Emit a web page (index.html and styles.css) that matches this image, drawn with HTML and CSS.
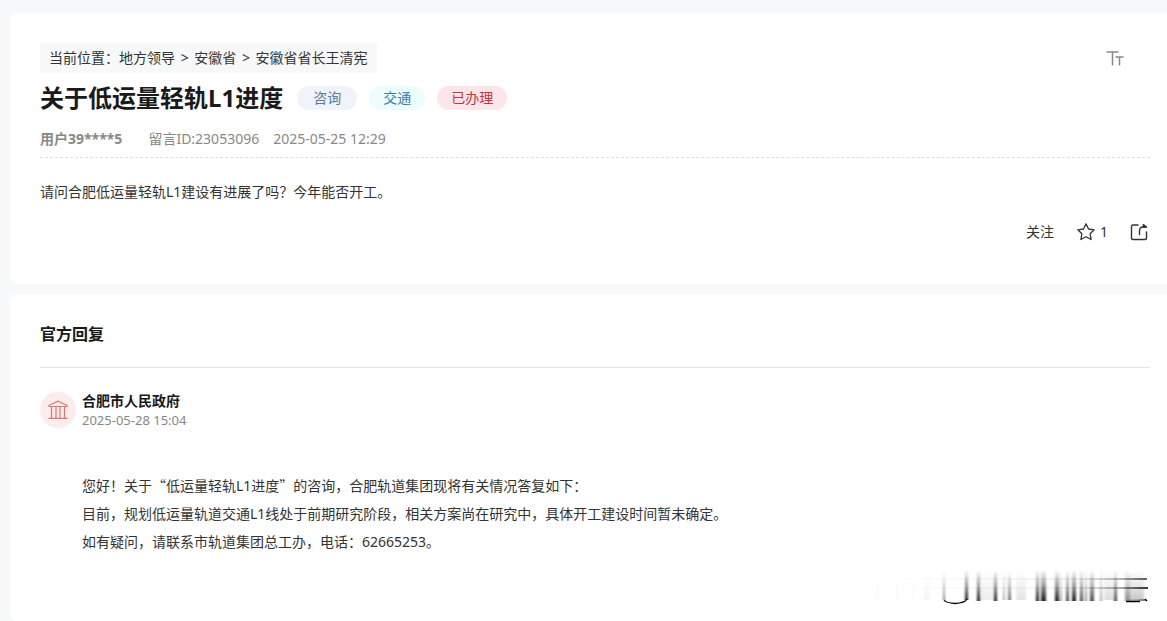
FILE: index.html
```
<!DOCTYPE html>
<html lang="zh-CN">
<head>
	<meta charset="utf-8">
	<title>关于低运量轻轨L1进度</title>
	<link rel="stylesheet" href="styles.css">
</head>
<body>
<main class="page">
	<article class="card message">
		<div class="top">
			<nav class="crumbs">当前位置：<a href="#">地方领导</a> <span class="sep">&gt;</span> <a href="#">安徽省</a> <span class="sep">&gt;</span> <a href="#">安徽省省长王清宪</a></nav>
			<button type="button" class="fontsize" aria-label="字号">
				<svg width="18" height="16" viewBox="0 0 18 16" fill="none" stroke="#888" stroke-width="1.5">
					<path d="M0.5 2H12.5M6.5 2V15.5M9.5 7H17.5M13.5 7V15.5"/>
				</svg>
			</button>
		</div>
		<div class="title">
			<h1>关于低运量轻轨L1进度</h1>
			<span class="tag tag-type">咨询</span>
			<span class="tag tag-field">交通</span>
			<span class="tag tag-state">已办理</span>
		</div>
		<div class="meta">
			<b>用户39****5</b>
			<span>留言ID:23053096</span>
			<time>2025-05-25 12:29</time>
		</div>
		<p class="question">请问合肥低运量轻轨L1建设有进展了吗？今年能否开工。</p>
		<div class="actions">
			<button type="button">关注</button>
			<button type="button" aria-label="收藏 1">
				<svg width="20" height="20" viewBox="0 0 20 20" fill="none" stroke="#333" stroke-width="1.3" stroke-linejoin="round">
					<path d="M10 1.8L12.5 7L18.2 7.8L14.1 11.8L15.1 17.5L10 14.8L4.9 17.5L5.9 11.8L1.8 7.8L7.5 7Z"/>
				</svg>
				1
			</button>
			<button type="button" aria-label="分享">
				<svg width="18" height="18" viewBox="0 0 18 18" fill="none" stroke="#333" stroke-width="1.4" stroke-linecap="round" stroke-linejoin="round">
					<path d="M8 2H3Q1.5 2 1.5 3.5V15Q1.5 16.5 3 16.5H15Q16.5 16.5 16.5 15V9"/>
					<path d="M9.5 11.5V8Q9.5 4 13 4H16"/>
					<path d="M13.4 1.6L16.4 4H13.4Z" fill="#333"/>
				</svg>
			</button>
		</div>
	</article>

	<section class="card reply">
		<h2>官方回复</h2>
		<div class="author">
			<div class="avatar">
				<svg width="20" height="20" viewBox="0 0 20 20" fill="none" stroke="#d9786f" stroke-width="1.2">
					<path d="M1 6.5V5.3L10 1.2L19 5.3V6.5ZM3.5 6.5V18M8 6.5V18M12 6.5V18M16.5 6.5V18M0.5 18.4H19.5"/>
				</svg>
			</div>
			<div>
				<h3>合肥市人民政府</h3>
				<time>2025-05-28 15:04</time>
			</div>
		</div>
		<div class="answer">
			<p>您好！关于<span class="quote">“</span>低运量轻轨L1进度<span class="quote">”</span>的咨询，合肥轨道集团现将有关情况答复如下：</p>
			<p>目前，规划低运量轨道交通L1线处于前期研究阶段，相关方案尚在研究中，具体开工建设时间暂未确定。</p>
			<p>如有疑问，请联系市轨道集团总工办，电话：62665253。</p>
		</div>
		<svg class="stamp" width="280" height="40" viewBox="0 0 280 40" aria-hidden="true">
			<defs>
				<linearGradient id="fade" x1="0" y1="0" x2="0" y2="1">
					<stop offset="0" stop-color="#000" stop-opacity="0"/>
					<stop offset=".5" stop-color="#000" stop-opacity=".4"/>
					<stop offset="1" stop-color="#000" stop-opacity=".9"/>
				</linearGradient>
				<linearGradient id="line" x1="0" y1="0" x2="1" y2="0">
					<stop offset="0" stop-color="#000" stop-opacity="0"/>
					<stop offset=".6" stop-color="#000" stop-opacity=".3"/>
					<stop offset="1" stop-color="#000" stop-opacity=".85"/>
				</linearGradient>
				<filter id="soft" x="-5%" y="-5%" width="110%" height="110%"><feGaussianBlur stdDeviation="1 .3"/></filter>
			</defs>
			<g fill="url(#fade)" filter="url(#soft)">
				<rect x="6" y="5" width="3" height="29" opacity=".03"/>
				<rect x="26" y="5" width="3" height="29" opacity=".03"/>
				<rect x="42" y="5" width="2" height="29" opacity=".03"/>
				<rect x="54" y="5" width="6" height="29" opacity=".04"/>
				<rect x="73" y="5" width="2" height="29" opacity=".5"/>
				<rect x="95" y="4" width="3" height="30"/>
				<rect x="107" y="4" width="3" height="31"/>
				<rect x="111" y="4" width="12" height="30" opacity=".08"/>
				<rect x="124" y="4" width="3" height="31"/>
				<rect x="133" y="5" width="2" height="29" opacity=".35"/>
				<rect x="138" y="5" width="3" height="29" opacity=".6"/>
				<rect x="146" y="5" width="10" height="29" opacity=".12"/>
				<rect x="166" y="4" width="3" height="31"/>
				<rect x="171" y="4" width="5" height="31"/>
				<rect x="185" y="4" width="4" height="31"/>
				<rect x="190" y="5" width="2" height="30" opacity=".4"/>
				<rect x="196" y="4" width="3" height="31" opacity=".8"/>
				<rect x="202" y="4" width="4" height="31"/>
				<rect x="210" y="4" width="3" height="31" opacity=".8"/>
				<rect x="215" y="4" width="2" height="31" opacity=".5"/>
				<rect x="220" y="4" width="4" height="31" opacity=".8"/>
				<rect x="230" y="4" width="2" height="31" opacity=".4"/>
				<rect x="234" y="5" width="9" height="29" opacity=".15"/>
				<rect x="244" y="4" width="3" height="31" opacity=".8"/>
				<rect x="255" y="4" width="5" height="31" opacity=".5"/>
				<rect x="260" y="5" width="14" height="30" opacity=".25"/>
			</g>
			<g fill="url(#line)">
				<rect x="0" y="12" width="276" height="2" opacity=".12"/>
				<rect x="0" y="21" width="276" height="2" opacity=".12"/>
				<rect x="210" y="12" width="67" height="2" opacity=".7"/>
				<rect x="210" y="21" width="68" height="2" opacity=".9"/>
				<rect x="256" y="33" width="20" height="2" opacity=".6"/>
			</g>
			<path d="M74 34Q76 37 85 37.5Q95 37 97 33M256 35.5H270M275 33L277 35" fill="none" stroke="#000" stroke-width="1.3"/>
		</svg>
	</section>
</main>
</body>
</html>
```
FILE: styles.css
```
html {
	font-family: "Noto Sans", "Noto Sans CJK SC", sans-serif;
	font-size: 14px;
	color: #333;
	background-color: #f7f8fa;
}
body { margin: 0; }
h1, h2, h3, p { margin: 0; }
a { color: inherit; text-decoration: none; }
button {
	display: flex;
	align-items: center;
	gap: 4px;
	padding: 0;
	border: 0;
	background: none;
	font: inherit;
	color: inherit;
	cursor: pointer;
}
svg { display: block; }

.page {
	display: flex;
	flex-direction: column;
	gap: 10px;
	min-height: 100vh;
	box-sizing: border-box;
	padding: 13px 0 0 10px;
}
.card {
	background-color: white;
	border-radius: 8px 0 0 8px;
	padding: 30px 17px 38px 30px;
}

.top {
	display: flex;
	justify-content: space-between;
	align-items: center;
}
.crumbs {
	line-height: 30px;
	padding: 0 9px;
	background-color: #f7f8fa;
}
.sep { margin: 0 2px; }
.fontsize { margin-right: 26px; }

.title {
	display: flex;
	align-items: center;
	gap: 12px;
	line-height: 50px;
}
h1 { margin-right: 2px; font-size: 24px; color: #1a1a1a; }
.tag {
	line-height: 24px;
	padding: 0 14px;
	border-radius: 12px;
}
.tag-type { padding: 0 16px; color: #5f7896; background-color: #f0f3fa; }
.tag-field { color: #3b7ba8; background-color: #ecfdfb; }
.tag-state { color: #c9303e; background-color: #fde6e9; }

.meta {
	display: flex;
	gap: 14px;
	line-height: 32px;
	padding-bottom: 2px;
	border-bottom: 1px dashed #ddd;
	color: #888;
}
.meta b { margin-right: 12px; }

.question { margin-top: 20px; line-height: 28px; }

.actions {
	display: flex;
	justify-content: flex-end;
	gap: 22px;
	margin-top: 12px;
	padding-right: 2px;
	line-height: 28px;
}

.reply { flex: 1; padding: 24px 17px 14px 30px; }
h2 {
	font-size: 16px;
	line-height: 32px;
	padding-bottom: 17px;
	border-bottom: 1px solid #e3e3e3;
	color: #1a1a1a;
}
.author {
	display: flex;
	align-items: center;
	gap: 6px;
	margin-top: 23px;
}
.avatar {
	display: flex;
	align-items: center;
	justify-content: center;
	width: 36px;
	height: 36px;
	border-radius: 50%;
	background-color: #fdeceb;
}
h3 { font-size: 14px; line-height: 20px; color: #1a1a1a; }
.author time {
	display: block;
	font-size: 13px;
	line-height: 18px;
	color: #888;
}
.answer {
	margin: 43px 0 10px 42px;
	line-height: 28px;
}
/* full-width quotation marks */
.quote { font-family: "Noto Sans CJK SC", sans-serif; line-height: 1; }
.stamp { margin-left: auto; }
```
